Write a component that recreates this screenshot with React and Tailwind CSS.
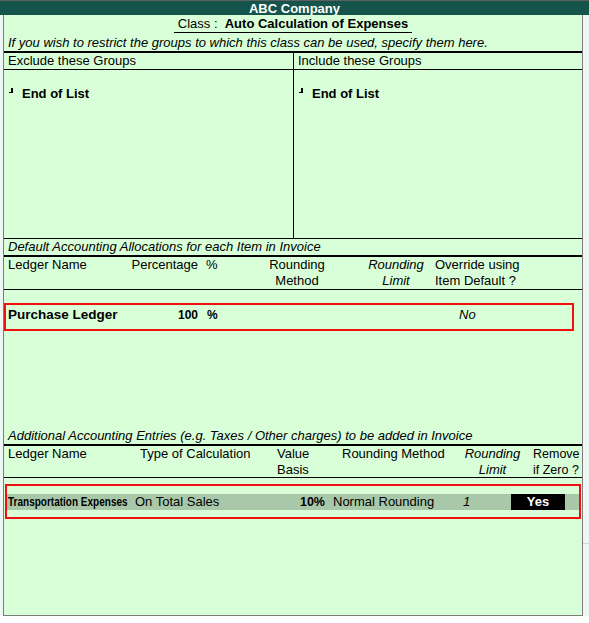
const green = "bg-[#d9ffd9]";

const EndMark = () => (
  <span className="inline-block w-[4px] h-[5px] border-r-2 border-b-[1.5px] border-black mr-[9px] relative top-[-4px]" />
);

const GroupColumn = ({ title, className }) => (
  <div className={className}>
    <div className="h-[17px] leading-[16px] pl-[4px] border-b border-black">{title}</div>
    <div className="mt-[16px] pl-[5px] leading-[16px] font-bold text-[13px] flex items-center">
      <EndMark />
      End of List
    </div>
  </div>
);

export default function App() {
  return (
    <div
      className="w-[589px] h-[623px] bg-white text-black text-[13px] overflow-hidden"
      style={{ fontFamily: '"Liberation Sans", Arial, sans-serif' }}
    >
      <div className="h-[1px] bg-[#5f5f5f]" />
      <div className="h-[14px] bg-[#14544a] text-white font-bold text-[13px] leading-[14px] text-center pt-[1px]">
        ABC Company
      </div>

      <div className="flex">
        <div className="w-[3px] h-[601px] bg-[#eef6f6]" />
        <div className={`w-[580px] h-[601px] border-l border-r border-b border-[#7c7c7c] ${green} flex flex-col`}>
          {/* class title */}
          <div className="h-[18px] flex justify-center pt-[1px]">
            <span className="leading-[15px] text-[13px] border-b-[1.5px] border-black px-[4px]">
              Class :&nbsp; <span className="font-bold">Auto Calculation of Expenses</span>
            </span>
          </div>
          <div className="h-[18px] pt-[2px] pl-[4px] italic leading-[16px] whitespace-nowrap">
            If you wish to restrict the groups to which this class can be used, specify them here.
          </div>
          <div className="h-[2px] bg-black" />

          {/* groups */}
          <div className="h-[186px] flex border-b border-black">
            <GroupColumn title="Exclude these Groups" className="w-[290px] border-r border-black" />
            <GroupColumn title="Include these Groups" className="flex-1" />
          </div>

          {/* default allocations */}
          <div className="h-[16px] pl-[4px] italic leading-[16px]">
            Default Accounting Allocations for each Item in Invoice
          </div>
          <div className="h-[2px] bg-black" />
          <div className="h-[33px] border-b border-black flex pl-[4px] leading-[16px] whitespace-nowrap">
            <div className="w-[122px] shrink-0">Ledger Name</div>
            <div className="w-[68px] shrink-0 text-right">Percentage</div>
            <div className="w-[44px] shrink-0 ml-[8px]">%</div>
            <div className="w-[94px] shrink-0 text-center">
              Rounding
              <br />
              Method
            </div>
            <div className="w-[72px] shrink-0 ml-[16px] text-center italic">
              Rounding
              <br />
              Limit
            </div>
            <div className="ml-[3px]">
              Override using
              <br />
              Item Default ?
            </div>
          </div>
          <div className="h-[138px]">
            <div className="mt-[13px] w-[570px] h-[28px] border-2 border-[#f01010] flex pl-[2px] pt-[2px] leading-[16px]">
              <div className="w-[122px] shrink-0 font-bold text-[13.5px]">Purchase Ledger</div>
              <div className="w-[68px] shrink-0 text-right font-bold text-[12px]">100</div>
              <div className="w-[44px] shrink-0 ml-[9px] font-bold text-[12px]">%</div>
              <div className="ml-[208px] italic">No</div>
            </div>
          </div>

          {/* additional entries */}
          <div className="h-[16px] pl-[4px] italic leading-[16px] whitespace-nowrap">
            Additional Accounting Entries (e.g. Taxes / Other charges) to be added in Invoice
          </div>
          <div className="h-[2px] bg-black" />
          <div className="h-[32px] border-b border-black flex pl-[4px] leading-[16px] whitespace-nowrap">
            <div className="w-[132px] shrink-0">Ledger Name</div>
            <div className="w-[137px] shrink-0">Type of Calculation</div>
            <div className="w-[65px] shrink-0">
              Value
              <br />
              Basis
            </div>
            <div className="w-[117px] shrink-0">Rounding Method</div>
            <div className="w-[67px] shrink-0 text-center italic">
              Rounding
              <br />
              Limit
            </div>
            <div className="ml-[7px] text-[12.5px]">
              Remove
              <br />
              if Zero ?
            </div>
          </div>
          <div className="flex-1">
            <div className="mt-[6px] ml-[1px] w-[576px] h-[35px] border-2 border-[#f01010] pt-[8px]">
              <div className="h-[16px] bg-[#a9c8a9] flex pl-[1px] leading-[16px] whitespace-nowrap">
                <div className="w-[127px] shrink-0 font-bold text-[13px]">
                  <span className="inline-block origin-left scale-x-[0.77]">Transportation Expenses</span>
                </div>
                <div className="w-[142px] shrink-0">On Total Sales</div>
                <div className="w-[48px] shrink-0 text-right font-bold text-[12.5px]">10%</div>
                <div className="w-[130px] shrink-0 ml-[8px]">Normal Rounding</div>
                <div className="w-[48px] shrink-0 italic">1</div>
                <div className="w-[54px] shrink-0 bg-black text-white font-bold text-[13px] text-center">
                  Yes
                </div>
              </div>
            </div>
          </div>
        </div>
        <div className="flex-1 h-[601px] bg-[#eef6f6] pt-[528px]">
          <div className="h-[1px] bg-[#cfd6d6]" />
        </div>
      </div>
    </div>
  );
}
